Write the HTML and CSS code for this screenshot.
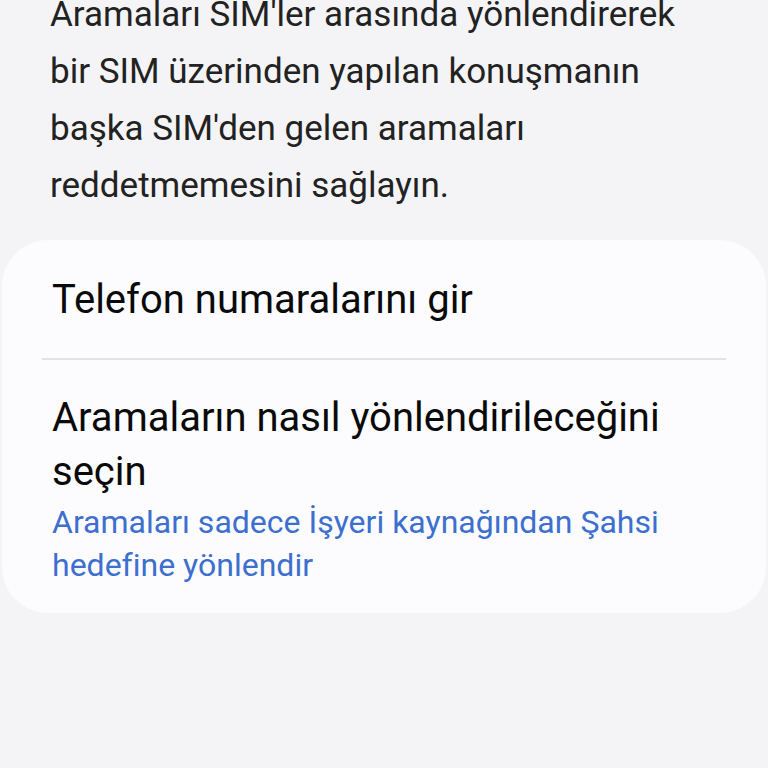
FILE: index.html
```html
<!DOCTYPE html>
<html lang="tr">
<head>
    <meta charset="UTF-8">
    <meta name="viewport" content="width=device-width, initial-scale=1.0">
    <title>Arama yönlendirme</title>
    <link rel="stylesheet" href="styles.css">
</head>
<body>
    <div class="screen">
        <p class="intro">
            Aramaları SIM'ler arasında yönlendirerek<br>
            bir SIM üzerinden yapılan konuşmanın<br>
            başka SIM'den gelen aramaları<br>
            reddetmemesini sağlayın.
        </p>

        <section class="card">
            <div class="item item-first">
                <div class="item-title">Telefon numaralarını gir</div>
            </div>
            <div class="divider"></div>
            <div class="item item-last">
                <div class="item-title">Aramaların nasıl yönlendirileceğini<br>seçin</div>
                <div class="item-sub">Aramaları sadece İşyeri kaynağından Şahsi<br>hedefine yönlendir</div>
            </div>
        </section>
    </div>
</body>
</html>
```

FILE: styles.css
```css
/* Genel */
body {
    margin: 0;
    padding: 0;
    background-color: #f4f4f6;
    font-family: Roboto, sans-serif;
    color: #1c1c1c;
}

.screen {
    width: 768px;
    height: 768px;
    overflow: hidden;
}

/* Açıklama metni */
.intro {
    margin: -14px 0 0 0;
    padding: 0 50px;
    font-size: 35px;
    line-height: 57px;
    color: #222222;
    white-space: nowrap;
}

/* Kart */
.card {
    margin: 26px 2px 0 2px;
    background-color: #fcfcfe;
    border-radius: 46px;
}

.item {
    padding: 0 40px 0 50px;
}

.item-first {
    padding-top: 33px;
    padding-bottom: 31px;
}

.item-last {
    padding-top: 31px;
    padding-bottom: 26px;
}

.item-title {
    font-size: 40px;
    line-height: 54px;
    color: #0a0a0a;
    white-space: nowrap;
}

.item-sub {
    margin-top: 2px;
    font-size: 32px;
    line-height: 43px;
    color: #3d6fcf;
    white-space: nowrap;
}

.divider {
    height: 2px;
    margin: 0 40px;
    background-color: #e3e3e5;
}
```
